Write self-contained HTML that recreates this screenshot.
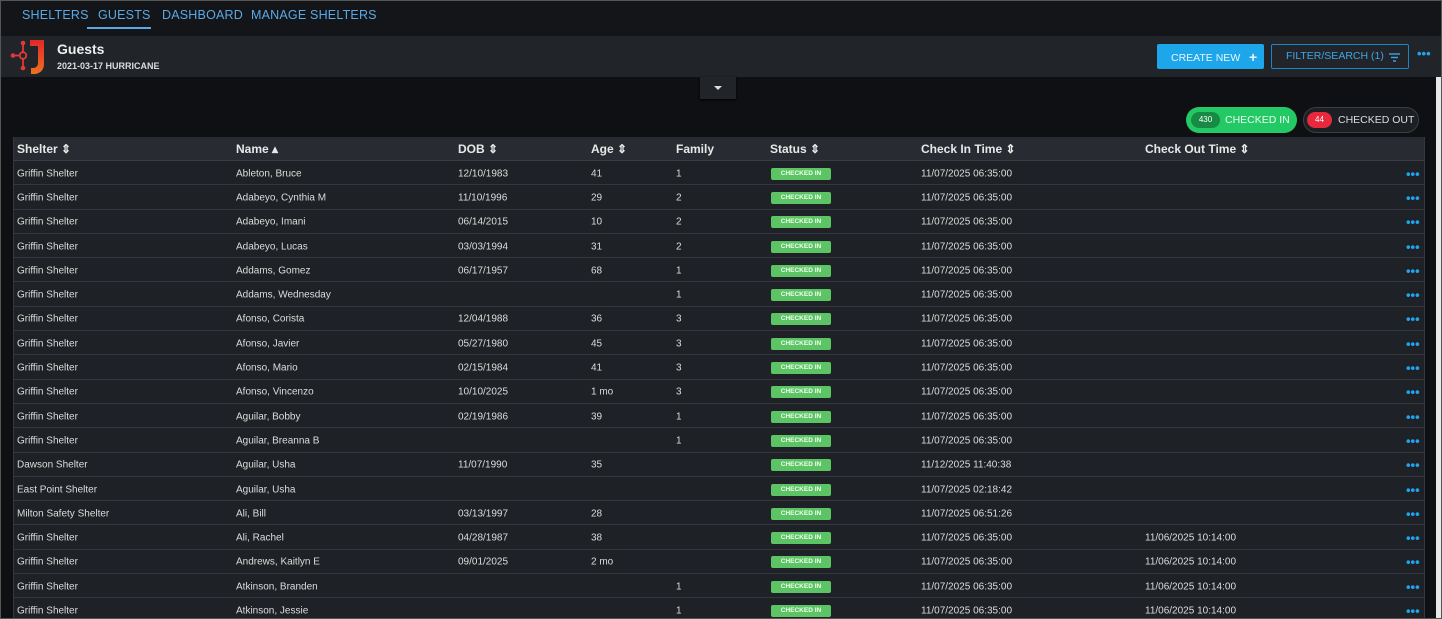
<!DOCTYPE html><html><head><style>
*{box-sizing:border-box;margin:0;padding:0}
html,body{width:1442px;height:619px;overflow:hidden}
body{background:#0f1013;font-family:"Liberation Sans",sans-serif;color:#e6e6e6;position:relative}
.frame{position:absolute;left:0;top:0;width:1442px;height:619px;border:1px solid #555;pointer-events:none;z-index:9}
.nav{position:absolute;left:0;top:0;width:1442px;height:36px;background:#141518}
.nav a{position:absolute;top:8px;font-size:12.5px;color:#5aa9e6;letter-spacing:.2px;white-space:nowrap}
.uline{position:absolute;left:87px;top:27px;width:64px;height:2px;background:#5aa9e6}
.hdr{position:absolute;left:0;top:36px;width:1442px;height:41px;background:#212429}
.title{position:absolute;left:57px;top:41px;font-size:14px;font-weight:bold;color:#eee}
.sub{position:absolute;left:57px;top:61px;font-size:9px;font-weight:bold;color:#ddd}
.btn1{position:absolute;left:1157px;top:44px;width:107px;height:25px;background:#1ea6ea;border-radius:2px;color:#e8f6ff;font-size:10.5px;line-height:24px;padding-left:14px;white-space:nowrap}
.btn2{position:absolute;left:1271px;top:44px;width:138px;height:25px;border:1px solid #1a87c4;border-radius:2px;color:#3ea6e6;font-size:10.5px;line-height:22px;padding-left:14px;white-space:nowrap}
.dots{position:absolute;color:#20a4f0;font-size:13px;font-weight:bold;letter-spacing:0}
.tog{position:absolute;left:700px;top:77px;width:36px;height:22px;background:#212429;box-shadow:0 1px 2px #000}
.tog:after{content:"";position:absolute;left:14px;top:9px;border-left:4px solid transparent;border-right:4px solid transparent;border-top:4px solid #ddd}
.pill{position:absolute;top:107px;height:26px;border-radius:13px;font-size:10.5px;line-height:26px;white-space:nowrap}
.p1{left:1186px;width:111px;background:#22c964;color:#eafff0}
.p2{left:1303px;width:116px;background:#1c1f24;border:1px solid #3a3d42;color:#ddd;line-height:24px}
.cnt{position:absolute;top:5px;height:16px;border-radius:8px;font-size:8px;line-height:16px;text-align:center;color:#fff}
.tbl{position:absolute;left:13px;top:137px;width:1412px;border-left:1px solid #34383e;border-right:1px solid #34383e}
.th{height:24px;background:#282c32;border-bottom:1px solid #3a3e44;position:relative;font-size:12px;font-weight:bold;color:#e8e8e8}
.tr{height:24.3px;background:#1e2125;border-bottom:1px solid #34383e;position:relative;font-size:10px;color:#ddd}
.th span,.tr span{position:absolute;top:50%;transform:translateY(-50%);white-space:nowrap}
.tr span{margin-top:1px}
.st{background:#5cc464;color:#f0fff0;font-size:6.5px;font-weight:bold;width:60px;height:12px;line-height:12px;text-align:center;border-radius:2px}
.sb{position:absolute;left:1436px;top:77px;width:5px;height:542px;background:#e8e8e8}
</style></head><body>
<div class="nav"><a style="left:22px">SHELTERS</a><a style="left:98px">GUESTS</a><a style="left:162px">DASHBOARD</a><a style="left:251px">MANAGE SHELTERS</a><div class="uline"></div></div>
<div class="hdr"></div>
<svg style="position:absolute;left:10px;top:38px" width="36" height="37" viewBox="0 0 36 37"><defs><linearGradient id="g" x1="0" y1="0" x2="0" y2="1"><stop offset="0" stop-color="#e02828"/><stop offset="1" stop-color="#f07020"/></linearGradient></defs><path d="M20 2h14v24c0 6-4 10-10 10h-3v-6h2c3 0 5-2 5-5V8h-8z" fill="url(#g)"/><g stroke="#e23838" stroke-width="1.8" fill="none"><circle cx="13" cy="17.5" r="3.3"/><line x1="13" y1="5" x2="13" y2="14"/><line x1="13" y1="21" x2="13" y2="30"/><line x1="3" y1="17.5" x2="9.7" y2="17.5"/></g><g fill="#e23838"><circle cx="13" cy="5" r="2.3"/><circle cx="13" cy="30" r="2.3"/><circle cx="3" cy="17.5" r="2.3"/></g></svg>
<div class="title">Guests</div><div class="sub">2021-03-17 HURRICANE</div>
<div class="btn1">CREATE NEW &nbsp;&nbsp;<b style="font-size:14px;position:relative;top:1px">+</b></div>
<div class="btn2">FILTER/SEARCH (1)<svg style="position:absolute;left:117px;top:8px" width="12" height="9"><g stroke="#3ea6e6" stroke-width="1.4"><line x1="0" y1="1" x2="11" y2="1"/><line x1="2" y1="4.5" x2="9" y2="4.5"/><line x1="4" y1="8" x2="7" y2="8"/></g></svg></div>
<div class="dots" style="left:1417px;top:46px">•••</div>
<div class="tog"></div>
<div class="pill p1"><div class="cnt" style="left:5px;width:29px;background:#178a45">430</div><span style="position:absolute;left:39px">CHECKED IN</span></div>
<div class="pill p2"><div class="cnt" style="left:3px;top:4px;width:25px;background:#e8283c">44</div><span style="position:absolute;left:34px">CHECKED OUT</span></div>
<div class="tbl" id="t">
<div class="th"><span style="left:3px">Shelter ⇕</span><span style="left:222px">Name ▴</span><span style="left:444px">DOB ⇕</span><span style="left:577px">Age ⇕</span><span style="left:662px">Family</span><span style="left:756px">Status ⇕</span><span style="left:907px">Check In Time ⇕</span><span style="left:1131px">Check Out Time ⇕</span></div>
</div>
<div class="sb"></div>
<div class="frame"></div>
<script>
var d=[["Griffin Shelter","Ableton, Bruce","12/10/1983","41","1","11/07/2025 06:35:00",""],
["Griffin Shelter","Adabeyo, Cynthia M","11/10/1996","29","2","11/07/2025 06:35:00",""],
["Griffin Shelter","Adabeyo, Imani","06/14/2015","10","2","11/07/2025 06:35:00",""],
["Griffin Shelter","Adabeyo, Lucas","03/03/1994","31","2","11/07/2025 06:35:00",""],
["Griffin Shelter","Addams, Gomez","06/17/1957","68","1","11/07/2025 06:35:00",""],
["Griffin Shelter","Addams, Wednesday","","","1","11/07/2025 06:35:00",""],
["Griffin Shelter","Afonso, Corista","12/04/1988","36","3","11/07/2025 06:35:00",""],
["Griffin Shelter","Afonso, Javier","05/27/1980","45","3","11/07/2025 06:35:00",""],
["Griffin Shelter","Afonso, Mario","02/15/1984","41","3","11/07/2025 06:35:00",""],
["Griffin Shelter","Afonso, Vincenzo","10/10/2025","1 mo","3","11/07/2025 06:35:00",""],
["Griffin Shelter","Aguilar, Bobby","02/19/1986","39","1","11/07/2025 06:35:00",""],
["Griffin Shelter","Aguilar, Breanna B","","","1","11/07/2025 06:35:00",""],
["Dawson Shelter","Aguilar, Usha","11/07/1990","35","","11/12/2025 11:40:38",""],
["East Point Shelter","Aguilar, Usha","","","","11/07/2025 02:18:42",""],
["Milton Safety Shelter","Ali, Bill","03/13/1997","28","","11/07/2025 06:51:26",""],
["Griffin Shelter","Ali, Rachel","04/28/1987","38","","11/07/2025 06:35:00","11/06/2025 10:14:00"],
["Griffin Shelter","Andrews, Kaitlyn E","09/01/2025","2 mo","","11/07/2025 06:35:00","11/06/2025 10:14:00"],
["Griffin Shelter","Atkinson, Branden","","","1","11/07/2025 06:35:00","11/06/2025 10:14:00"],
["Griffin Shelter","Atkinson, Jessie","","","1","11/07/2025 06:35:00","11/06/2025 10:14:00"]];
var h="";d.forEach(function(r){h+='<div class="tr"><span style="left:3px">'+r[0]+'</span><span style="left:222px">'+r[1]+'</span><span style="left:444px">'+r[2]+'</span><span style="left:577px">'+r[3]+'</span><span style="left:662px">'+r[4]+'</span><span class="st" style="left:757px">CHECKED IN</span><span style="left:907px">'+r[5]+'</span><span style="left:1131px">'+r[6]+'</span><span class="dots" style="left:1392px">•••</span></div>'});
document.getElementById("t").innerHTML+=h;
</script>
</body></html>
